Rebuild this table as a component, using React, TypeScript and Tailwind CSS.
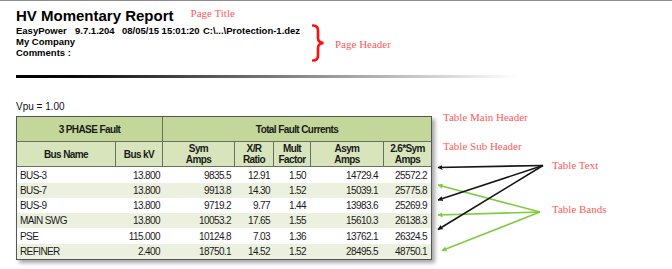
import React from "react";

const rows: string[][] = [
  ["BUS-3", "13.800", "9835.5", "12.91", "1.50", "14729.4", "25572.2"],
  ["BUS-7", "13.800", "9913.8", "14.30", "1.52", "15039.1", "25775.8"],
  ["BUS-9", "13.800", "9719.2", "9.77", "1.44", "13983.6", "25269.9"],
  ["MAIN SWG", "13.800", "10053.2", "17.65", "1.55", "15610.3", "26138.3"],
  ["PSE", "115.000", "10124.8", "7.03", "1.36", "13762.1", "26324.5"],
  ["REFINER", "2.400", "18750.1", "14.52", "1.52", "28495.5", "48750.1"],
];

const rowH = ["h-[16px]", "h-[15px]", "h-[15px]", "h-[15px]", "h-[16px]", "h-[15px]"];
const colW = ["w-[99px]", "w-[47px]", "w-[72px]", "w-[39px]", "w-[37px]", "w-[73px]", "w-[47px]"];
const colPad = ["pl-[3px] justify-start", "pr-[3px] justify-end", "pr-[4px] justify-end", "pr-[4px] justify-end", "pr-[5px] justify-end", "pr-[6px] justify-end", "pr-[4px] justify-end"];

const sub: string[][] = [
  ["Bus Name"],
  ["Bus kV"],
  ["Sym", "Amps"],
  ["X/R", "Ratio"],
  ["Mult", "Factor"],
  ["Asym", "Amps"],
  ["2.6*Sym", "Amps"],
];

const serif = "[font-family:'Liberation_Serif',serif] text-[11px] leading-[11px] text-[#ff5a5a] whitespace-nowrap";

export default function App() {
  return (
    <div className="relative w-[672px] h-[269px] overflow-hidden bg-white border-t border-[#8c8c8c] text-black [font-family:'Liberation_Sans',Arial,sans-serif]">
      {/* Page title */}
      <div className="pl-4 pt-[6px] flex items-start">
        <div className="text-[15px] leading-[18px] font-bold whitespace-nowrap">HV Momentary Report</div>
        <div className={serif + " ml-[17px] mt-[1px]"}>Page Title</div>
      </div>

      {/* Page header */}
      <div className="pl-4 flex items-start">
        <div className="w-[296px] text-[9.5px] leading-[11px] font-bold whitespace-nowrap">
          <div className="flex">
            <span className="w-[59px]">EasyPower</span>
            <span className="w-[47px]">9.7.1.204</span>
            <span className="w-[81px]">08/05/15 15:01:20</span>
            <span>C:\...\Protection-1.dez</span>
          </div>
          <div>My Company</div>
          <div>Comments :</div>
        </div>
        <svg width="14" height="40" viewBox="0 0 14 40" className="mt-[-1px]">
          <path
            d="M1,1.5 Q6,1.5 6,6.5 L6,14 Q6,18.5 11.5,19 Q6,19.5 6,24 L6,31.5 Q6,36.5 1,36.5"
            fill="none"
            stroke="#ff1010"
            strokeWidth="2.6"
            strokeLinecap="round"
          />
        </svg>
        <div className={serif + " ml-[9px] mt-[14px]"}>Page Header</div>
      </div>

      {/* Gradient rule */}
      <div className="ml-4 mt-[11px] w-[502px] h-[3px] bg-[linear-gradient(to_right,#000_0%,#0a0a0a_12%,#8a8a8a_57%,#ffffff_100%)]" />

      {/* Vpu */}
      <div className="pl-4 mt-[23px] text-[10px] leading-[12px] text-[#111]">Vpu = 1.00</div>

      {/* Table */}
      <div className="ml-4 mt-[3px] w-[416px] border border-[#555] bg-white shadow-[3px_3px_4px_rgba(0,0,0,0.35)] text-[10px] tracking-[-0.6px] text-[#1a1a1a]">
        <div className="flex h-[25px] border-b border-[#66705a] bg-[#c4d79b] font-bold">
          <div className="w-[146px] border-r border-[#66705a] flex items-center justify-center">3 PHASE Fault</div>
          <div className="flex-1 flex items-center justify-center">Total Fault Currents</div>
        </div>
        <div className="flex h-[25px] border-b border-[#66705a] bg-[#d8e4bc] font-bold leading-[11px]">
          {sub.map((lines, i) => (
            <div
              key={i}
              className={
                colW[i] +
                " flex flex-col items-center justify-center text-center " +
                (i < 6 ? "border-r border-[#66705a]" : "")
              }
            >
              {lines.map((l, j) => (
                <div key={j}>{l}</div>
              ))}
            </div>
          ))}
        </div>
        {rows.map((r, i) => (
          <div key={i} className={"flex " + rowH[i] + (i % 2 === 1 ? " bg-[#ebf1de]" : " bg-white")}>
            {r.map((c, j) => (
              <div key={j} className={colW[j] + " flex items-center whitespace-nowrap " + colPad[j]}>
                {c}
              </div>
            ))}
          </div>
        ))}
      </div>

      {/* Annotations */}
      <div className={serif + " absolute left-[443px] top-[111px]"}>Table Main Header</div>
      <div className={serif + " absolute left-[443px] top-[140px]"}>Table Sub Header</div>
      <div className={serif + " absolute left-[552px] top-[159px]"}>Table Text</div>
      <div className={serif + " absolute left-[552px] top-[203px]"}>Table Bands</div>

      <svg className="absolute left-0 top-0 pointer-events-none" width="672" height="269" viewBox="0 0 672 269">
        <defs>
          <marker id="ab" viewBox="0 0 10 10" refX="9" refY="5" markerWidth="5" markerHeight="5" markerUnits="userSpaceOnUse" orient="auto">
            <path d="M0,0 L10,5 L0,10 z" fill="#151515" />
          </marker>
          <marker id="ag" viewBox="0 0 10 10" refX="9" refY="5" markerWidth="5" markerHeight="5" markerUnits="userSpaceOnUse" orient="auto">
            <path d="M0,0 L10,5 L0,10 z" fill="#7ccc3c" />
          </marker>
        </defs>
        <g stroke="#7ccc3c" strokeWidth="1.6" fill="none">
          <line x1="540" y1="211" x2="438" y2="184" markerEnd="url(#ag)" />
          <line x1="540" y1="211" x2="438" y2="214" markerEnd="url(#ag)" />
          <line x1="540" y1="211" x2="442" y2="249.5" markerEnd="url(#ag)" />
        </g>
        <g stroke="#151515" strokeWidth="1.6" fill="none">
          <line x1="543" y1="164.5" x2="438" y2="166.5" markerEnd="url(#ab)" />
          <line x1="543" y1="164.5" x2="438" y2="199" markerEnd="url(#ab)" />
          <line x1="543" y1="164.5" x2="438" y2="228.5" markerEnd="url(#ab)" />
        </g>
      </svg>
    </div>
  );
}
